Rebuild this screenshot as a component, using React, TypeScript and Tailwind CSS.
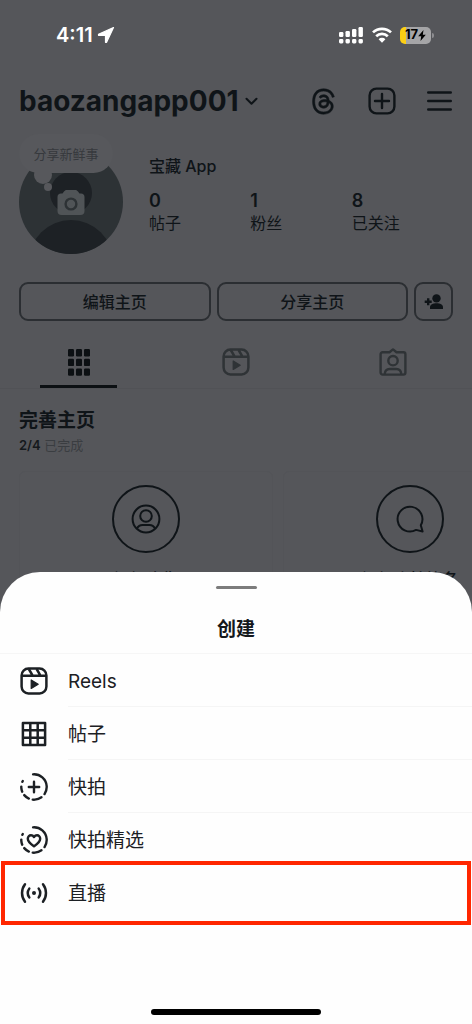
import React from "react";
import { FaThreads } from "react-icons/fa6";

const stats = [
  { value: "0", label: "帖子" },
  { value: "1", label: "粉丝" },
  { value: "8", label: "已关注" },
];

const ReelsIcon: React.FC = () => (
  <svg width="28" height="28" viewBox="0 0 28 28" fill="none" stroke="currentColor" strokeWidth="2.5" strokeLinejoin="round">
    <rect x="1.6" y="1.6" width="24.8" height="24.8" rx="6.8" />
    <path d="M2 8.8h24M8.8 2l4 6.8M16.6 2l4 6.8" />
    <path d="M11.2 13v8.4l7-4.2z" fill="currentColor" strokeWidth="1.2" />
  </svg>
);

const GridIcon: React.FC = () => (
  <svg width="28" height="28" viewBox="0 0 28 28" fill="none" stroke="currentColor" strokeWidth="2.5" strokeLinejoin="round">
    <path d="M2.9 2.9h22.2v22.2H2.9zM10.3 3v22M17.7 3v22M3 10.3h22M3 17.7h22" />
  </svg>
);

const StoryRing: React.FC = () => (
  <circle
    cx="14"
    cy="14"
    r="12.7"
    pathLength="360"
    strokeDasharray="128 20 42 18 26 18 24 22 4 58"
    transform="rotate(-94 14 14)"
  />
);

const StoryIcon: React.FC = () => (
  <svg width="28" height="28" viewBox="0 0 28 28" fill="none" stroke="currentColor" strokeWidth="2.4" strokeLinecap="round">
    <StoryRing />
    <path d="M14 8.8v10.4M8.8 14h10.4" />
  </svg>
);

const HighlightIcon: React.FC = () => (
  <svg width="28" height="28" viewBox="0 0 28 28" fill="none" stroke="currentColor" strokeWidth="2.4" strokeLinecap="round" strokeLinejoin="round">
    <StoryRing />
    <path d="M14 20.2c-1.3-.9-6.2-3.8-6.2-7.4 0-2 1.4-3.5 3.2-3.5 1.3 0 2.3.7 3 1.8.7-1.1 1.7-1.8 3-1.8 1.8 0 3.200 1.500 3.200 3.500 0 3.600-4.900 6.500-6.200 7.400z" />
  </svg>
);

const LiveIcon: React.FC = () => (
  <svg width="28" height="28" viewBox="0 0 28 28" fill="none" stroke="currentColor" strokeWidth="2.5" strokeLinecap="round">
    <path d="M5 5.200a14.500 14.500 0 0 0 0 17.600M23 5.200a14.500 14.500 0 0 1 0 17.600M9.300 9.600a7.600 7.600 0 0 0 0 8.800M18.700 9.600a7.600 7.600 0 0 1 0 8.800" />
    <circle cx="14" cy="14" r="2" fill="currentColor" stroke="none" />
  </svg>
);

const menuItems = [
  { label: "Reels", icon: <ReelsIcon />, line: true },
  { label: "帖子", icon: <GridIcon />, line: true },
  { label: "快拍", icon: <StoryIcon />, line: true },
  { label: "快拍精选", icon: <HighlightIcon />, line: false },
];

const StatusBar: React.FC = () => (
  <div className="flex h-[70px] items-center justify-between pl-14 pr-[38px]">
    <div className="flex items-center gap-1 text-white">
      <span className="text-[20px] font-semibold">4:11</span>
      <svg width="18" height="18" viewBox="0 0 18 18" fill="currentColor" stroke="currentColor" strokeWidth="1.2" strokeLinejoin="round">
        <path d="M16.500 1.500 1.500 8.200v1.100h7v7h1.100z" />
      </svg>
    </div>
    <div className="flex items-center gap-2 text-white">
      <svg width="25" height="18" viewBox="0 0 25 18" fill="currentColor">
        <rect x="0" y="6" width="4.4" height="5" rx="1.2" />
        <rect x="6.5" y="5" width="4.4" height="6" rx="1.2" />
        <rect x="13" y="3" width="4.4" height="8" rx="1.2" />
        <rect x="19.5" y="1" width="4.4" height="10" rx="1.2" />
        <rect x="0" y="13" width="4.4" height="4.4" rx="1.4" />
        <rect x="6.5" y="13" width="4.4" height="4.4" rx="1.4" />
        <rect x="13" y="13" width="4.4" height="4.4" rx="1.4" />
        <rect x="19.5" y="13" width="4.4" height="4.4" rx="1.4" />
      </svg>
      <svg width="20" height="16" viewBox="0 0 20 16" fill="none" stroke="currentColor" strokeWidth="2.7">
        <path d="M1 5.400a13 13 0 0 1 18 0M4.200 9.200a8.400 8.400 0 0 1 11.600 0" />
        <path d="M10 15.800 6.600 12.200a4.700 4.700 0 0 1 6.800 0z" fill="currentColor" stroke="none" />
      </svg>
      <div className="flex items-center gap-px">
        <div className="flex h-[17px] w-[31px] items-center justify-center overflow-hidden rounded-[5px] bg-linear-to-r from-[#fccf14] from-18% to-[#a5a5a7] to-18% text-black">
          <span className="text-[13px] font-bold">17</span>
          <svg width="8" height="11" viewBox="0 0 8 11" fill="currentColor">
            <path d="M5.500 0 .2 6.300h3L2.500 11l5.300-6.300h-3z" />
          </svg>
        </div>
        <div className="h-[5px] w-[2px] rounded-r-full bg-[#8d8d90]" />
      </div>
    </div>
  </div>
);

const Avatar: React.FC = () => (
  <div className="relative h-[120px] w-[104px] shrink-0">
    <svg className="absolute bottom-0 left-0" width="104" height="104" viewBox="0 0 104 104">
      <defs>
        <clipPath id="avatar">
          <circle cx="52" cy="52" r="52" />
        </clipPath>
      </defs>
      <g clipPath="url(#avatar)">
        <rect width="104" height="104" fill="#2d3235" />
        <circle cx="52" cy="43" r="21" fill="#1d2125" />
        <circle cx="52" cy="112" r="42" fill="#1d2125" />
      </g>
      <path
        d="M43.500 43.500 45 41.500c.7-.9 1.500-1.500 2.800-1.500h8.400c1.300 0 2.100.6 2.800 1.500l1.500 2h1.500c2.200 0 3.500 1.500 3.500 3.500v14c0 2.600-1.500 4-4 4h-19c-2.500 0-4-1.400-4-4V47c0-2 1.300-3.500 3.500-3.500z"
        fill="#505457"
      />
      <circle cx="52" cy="54" r="5.400" fill="none" stroke="#2d3235" strokeWidth="2.400" />
      <circle cx="24" cy="25" r="9" fill="#57585c" />
      <circle cx="29" cy="37" r="4" fill="#57585c" />
    </svg>
    <div className="absolute left-0 top-0 flex h-[39px] w-[94px] items-center justify-center rounded-full bg-[#57585c] pt-[3px] text-[13px] text-[#36393d]">
      分享新鲜事
    </div>
  </div>
);

const Profile: React.FC = () => (
  <main>
    {/* Account bar */}
    <header className="flex h-[62px] items-center justify-between pl-[19px] pr-5">
      <button className="flex items-center gap-[6px]">
        <h1 className="text-[28px] font-bold">baozangapp001</h1>
        <svg width="13" height="9" viewBox="0 0 13 9" fill="none" stroke="currentColor" strokeWidth="2" strokeLinecap="round" strokeLinejoin="round">
          <path d="m1.500 1.800 5 4.900 5-4.900" />
        </svg>
      </button>
      <div className="flex items-center gap-[31px]">
        <button aria-label="Threads">
          <FaThreads size={27} stroke="currentColor" strokeWidth={10} />
        </button>
        <button aria-label="新建">
          <svg width="28" height="28" viewBox="0 0 28 28" fill="none" stroke="currentColor" strokeWidth="2.4" strokeLinecap="round">
            <rect x="1.600" y="1.600" width="24.800" height="24.800" rx="6.800" />
            <path d="M14 7v14M7 14h14" />
          </svg>
        </button>
        <button aria-label="菜单">
          <svg width="25" height="22" viewBox="0 0 25 22" fill="none" stroke="currentColor" strokeWidth="2.4" strokeLinecap="round">
            <path d="M1.200 2.500h22.600M1.200 11h22.600M1.200 19.500h22.600" />
          </svg>
        </button>
      </div>
    </header>

    {/* Avatar and numbers */}
    <section className="mt-[2px] flex gap-[26px] px-[19px]">
      <Avatar />
      <div className="flex-1 pt-5">
        <h2 className="text-[16px] leading-6 font-medium">宝藏 App</h2>
        <dl className="mt-3 grid grid-cols-3">
          {stats.map((s) => (
            <div key={s.label} className="flex flex-col-reverse">
              <dt className="text-[16px] leading-[22px]">{s.label}</dt>
              <dd className="text-[18px] leading-[22px] font-semibold">{s.value}</dd>
            </div>
          ))}
        </dl>
      </div>
    </section>

    <div className="mt-7 flex gap-[6px] px-[19px]">
      <button className="h-[39px] flex-1 rounded-[9px] border-2 border-[#2b2e32] text-[16px] font-medium">编辑主页</button>
      <button className="h-[39px] flex-1 rounded-[9px] border-2 border-[#2b2e32] text-[16px] font-medium">分享主页</button>
      <button aria-label="发现用户" className="flex h-[39px] w-[39px] items-center justify-center rounded-[9px] border-2 border-[#2b2e32]">
        <svg width="19" height="16" viewBox="0 0 19 16" fill="currentColor">
          <circle cx="12.500" cy="4.400" r="4.200" />
          <path d="M6 15v-1.800c0-2.700 3-3.900 6.500-3.900s6.500 1.200 6.500 3.900V15z" />
          <path d="M4.200 4.200v7M.7 7.700h7" fill="none" stroke="currentColor" strokeWidth="2.4" />
        </svg>
      </button>
    </div>

    {/* Tabs */}
    <div role="tablist" className="grid h-[68px] grid-cols-3 border-b border-[#515256] text-[#2f3336]">
      <button role="tab" aria-selected="true" aria-label="帖子" className="flex flex-col items-center justify-end text-[#0c1013]">
        <svg width="22" height="27" viewBox="0 0 22 27" fill="currentColor">
          {[0, 8, 16].map((x) =>
            [0, 9.7, 19.4].map((y) => <rect key={`${x}-${y}`} x={x} y={y} width="6" height="7.400" rx="1.200" />)
          )}
        </svg>
        <span className="mt-[9px] h-[3px] w-[49%] bg-current" />
      </button>
      <button role="tab" aria-selected="false" aria-label="Reels" className="flex items-center justify-center pt-[14px]">
        <ReelsIcon />
      </button>
      <button role="tab" aria-selected="false" aria-label="标记" className="flex items-center justify-center pt-[14px]">
        <svg width="28" height="28" viewBox="0 0 28 28" fill="none" stroke="currentColor" strokeWidth="2.4" strokeLinejoin="round">
          <path d="M3.600 4.200h6.900L14 1.400l3.500 2.800h6.900c1.100 0 2 .9 2 2v18.400c0 1.100-.9 2-2 2H3.600c-1.100 0-2-.9-2-2V6.200c0-1.100.9-2 2-2z" />
          <circle cx="14" cy="12.700" r="4.700" />
          <path d="M5.600 26.400c.3-3.800 2.300-5.400 5-5.400h6.800c2.700 0 4.700 1.600 5 5.400" />
        </svg>
      </button>
    </div>

    {/* Profile completion */}
    <section className="pl-[19px] pt-[18px]">
      <h2 className="text-[19px] leading-7 font-bold">完善主页</h2>
      <p className="text-[13px] leading-5 text-[#3a3d41]">
        <span className="font-semibold text-[#15191c]">2/4</span> 已完成
      </p>
      <div className="mt-4 flex gap-[10px] overflow-hidden">
        <div className="flex h-[200px] w-[254px] shrink-0 flex-col items-center rounded-md border border-[#535458] pt-[13px]">
          <svg width="68" height="68" viewBox="0 0 68 68" fill="none" stroke="currentColor" strokeWidth="2">
            <circle cx="34" cy="34" r="33" />
            <circle cx="34" cy="34" r="13.400" />
            <circle cx="34" cy="31" r="5.800" />
            <path d="M25 43.500c1.300-2.600 3-3.500 5.500-3.500h7c2.500 0 4.200.9 5.500 3.500" />
          </svg>
          <p className="mt-[14px] text-[16px] leading-6 font-medium">添加头像</p>
        </div>
        <div className="flex h-[200px] w-[254px] shrink-0 flex-col items-center rounded-md border border-[#535458] pt-[13px]">
          <svg width="68" height="68" viewBox="0 0 68 68" fill="none" stroke="currentColor" strokeWidth="2" strokeLinejoin="round">
            <circle cx="34" cy="34" r="33" />
            <path d="M44.800 40.200a12.400 12.400 0 1 0-4.700 4.700l6.500 1.600z" />
          </svg>
          <p className="mt-[14px] text-[16px] leading-6 font-medium">添加个性签名</p>
        </div>
      </div>
    </section>
  </main>
);

const CreateSheet: React.FC = () => (
  <div
    role="dialog"
    aria-labelledby="sheet-title"
    className="absolute inset-x-0 bottom-0 flex flex-col rounded-t-[40px] bg-[#fefefe] pt-[14px] text-[#1c2024]"
  >
    <div className="mx-auto h-[3px] w-[41px] rounded-full bg-[#7c7c7c]" />
    <h2 id="sheet-title" className="mt-[13px] flex h-[52px] items-center justify-center border-b border-[#f6f6f6] pt-[6px] text-[19px] font-bold text-[#14181c]">
      创建
    </h2>
    {menuItems.map((item) => (
      <button key={item.label} className="flex h-[53px] items-center gap-5 pl-5 text-left text-[19px]">
        {item.icon}
        <span className={`flex h-full flex-1 items-center pt-1 ${item.line ? "border-b border-[#f5f5f5]" : ""}`}>
          {item.label}
        </span>
      </button>
    ))}
    <button className="mx-px -mt-[5px] flex h-16 items-center gap-5 border-4 border-[#ff2600] pl-[15px] text-left text-[19px]">
      <LiveIcon />
      <span className="pt-[2px]">直播</span>
    </button>
    <div className="mx-auto mt-[84px] mb-[9px] h-[6px] w-[36%] rounded-full bg-black" />
  </div>
);

const App: React.FC = () => {
  return (
    <div className="relative h-screen w-full overflow-hidden bg-[#55565a] font-['Inter','Noto_Sans_CJK_SC',sans-serif] text-[#0f1418]">
      <StatusBar />
      <Profile />
      <CreateSheet />
    </div>
  );
};

export default App;
